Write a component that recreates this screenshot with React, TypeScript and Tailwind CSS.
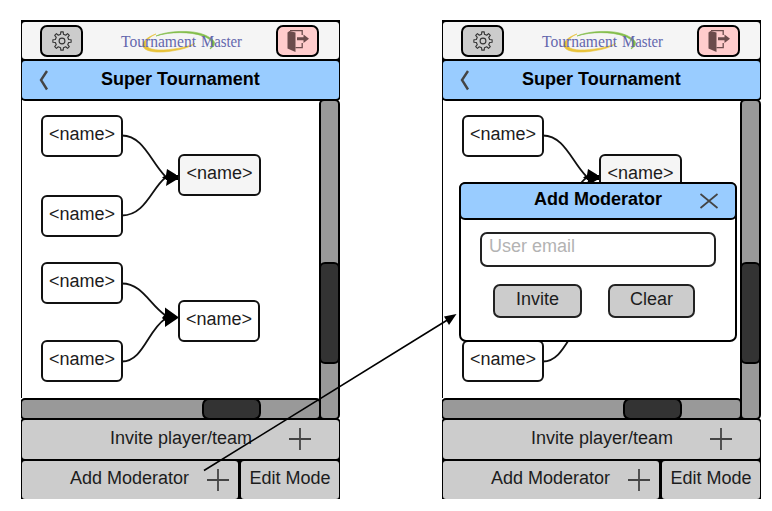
import type { ReactNode } from "react";

const TEXT = "text-[18px] leading-[20px] text-[#1c1c1c] whitespace-nowrap";

function gearPath(cx: number, cy: number, teeth: number, outer: number, inner: number) {
  const step = (Math.PI * 2) / teeth;
  const points: string[] = [];
  for (let i = 0; i < teeth; i++) {
    const a = i * step - Math.PI / 2;
    const corners: [number, number][] = [
      [inner, -0.27],
      [outer, -0.17],
      [outer, 0.17],
      [inner, 0.27],
    ];
    for (const [r, t] of corners) {
      points.push(`${(cx + r * Math.cos(a + t * step)).toFixed(2)} ${(cy + r * Math.sin(a + t * step)).toFixed(2)}`);
    }
  }
  return `M${points.join("L")}Z`;
}

function GearIcon() {
  return (
    <svg width="22" height="22" viewBox="0 0 22 22" fill="none" stroke="#333" strokeWidth="1.1" strokeLinejoin="round">
      <path d={gearPath(11, 11, 8, 9.2, 6.8)} />
      <circle cx="11" cy="11" r="2.9" />
    </svg>
  );
}

function ExitIcon() {
  return (
    <svg width="24" height="24" viewBox="0 0 24 24" fill="none" stroke="#6b4c4c" strokeWidth="1.3">
      <path d="M1.500 3.500L3.500 2L9.500 3.500V23L1.500 19.500Z" fill="#6b4c4c" stroke="none" />
      <path d="M4 1.600H16.200V6M16.200 14V18.700H9.500" />
      <path d="M11 8.300H17.500V5.500L23 9.800L17.500 14V11.300H11Z" fill="#6b4c4c" stroke="none" />
    </svg>
  );
}

function Logo() {
  return (
    <svg className="overflow-visible" width="124" height="30" viewBox="0 0 124 30" fill="none">
      <path d="M36 8C27 11 22 16 23 20.500C26 27 42 27.500 60 23.500C67 22 72 19.500 75 17.500C68 20.500 61 22 54 23C39 25 28.500 24 26.500 19.500C25 15.500 29 11 36 8Z" fill="#e8c23a" stroke="#e8c23a" strokeWidth=".6" />
      <path d="M36 10C46 5 73 3 86 9.500C95 14 98 18 90 23C94 17 91 13 83 10C70 5.500 50 5.500 36 10Z" fill="#83bd4a" stroke="#83bd4a" strokeWidth=".6" />
      <g fontSize="16" fill="#6467ad" fontFamily="'Liberation Serif', serif">
        <text x="1" y="21" textLength="75" lengthAdjust="spacingAndGlyphs">Tournament</text>
        <text x="81" y="21" textLength="41" lengthAdjust="spacingAndGlyphs">Master</text>
      </g>
    </svg>
  );
}

function PlusIcon() {
  return (
    <svg width="24" height="24" viewBox="0 0 24 24" stroke="#444" strokeWidth="1.8">
      <path d="M12 1V23M1 12H23" />
    </svg>
  );
}

const NODES = [
  { place: "left-[20px] top-[16px] w-[82px] bg-white" },
  { place: "left-[20px] top-[96px] w-[82px] bg-white" },
  { place: "left-[20px] top-[163px] w-[82px] bg-white" },
  { place: "left-[20px] top-[241px] w-[82px] bg-white" },
  { place: "left-[157px] top-[55px] w-[83px] bg-[#f5f5f5]" },
  { place: "left-[157px] top-[201px] w-[82px] bg-white" },
];

function Bracket() {
  return (
    <div className="relative flex-1 border-l border-black bg-white">
      <svg className="absolute -left-px top-0" width="299" height="299" viewBox="0 0 299 299" fill="none" stroke="#111" strokeWidth="1.8">
        <path d="M101 36.500C122 36.500 130 63 144 77" />
        <path d="M101 116.500C124 116.500 131 89 144 79" />
        <path d="M101 184.500C121 184.500 129 206 144 216" />
        <path d="M101 262.500C122 262.500 127 231 144 220" />
        <path d="M145 78.500H158" stroke="#000" strokeWidth="5" />
        <path d="M146 70L155 75.500V81L145 87L146 81L141 78.500L145 76Z" fill="#000" stroke="none" />
        <path d="M144 208.500L158 218.500L144 228V222L141 219L144 215Z" fill="#000" stroke="none" />
      </svg>
      <div className="absolute -left-px top-0">
        {NODES.map((node) => (
          <div key={node.place} className={`absolute flex h-[42px] justify-center rounded-[6px] border-2 border-[#111] pt-[7px] ${node.place}`}>
            <span className={TEXT}>&lt;name&gt;</span>
          </div>
        ))}
      </div>
    </div>
  );
}

function Phone({ children }: { children?: ReactNode }) {
  return (
    <section className="relative h-[479px] w-[319px] shrink-0">
      <div className="flex h-full flex-col overflow-hidden bg-black">
        <header className="-mx-px flex h-[41px] shrink-0 items-center justify-between rounded-[5px] border-2 border-black bg-[#f5f5f5] pl-[18px] pr-[20px]">
          <button className="flex h-[32px] w-[43px] items-center justify-center rounded-[7px] border-2 border-black bg-[#ccc]">
            <GearIcon />
          </button>
          <div className="pl-1">
            <Logo />
          </div>
          <button className="flex h-[32px] w-[43px] items-center justify-center rounded-[7px] border-2 border-black bg-[#fcc]">
            <ExitIcon />
          </button>
        </header>
        <div className="z-10 -mx-px -mt-[2px] flex h-[42px] shrink-0 items-start rounded-[5px] border-2 border-black bg-[#9cf] pl-[15px] pt-[8px]">
          <svg width="14" height="22" viewBox="0 0 14 22" fill="none" stroke="#444" strokeWidth="2.4">
            <path d="M10 2L4 11L10 20.500" />
          </svg>
          <h1 className="ml-[50px] whitespace-nowrap text-[18px] font-bold leading-[20px] text-black">Super Tournament</h1>
        </div>
        <div className="-mt-[2px] flex h-[321px] shrink-0 bg-white">
          <div className="flex w-[301px] flex-col">
            <Bracket />
            <div className="-ml-px flex h-[22px] rounded-[5px] border-2 border-black bg-[#999] pl-[180px]">
              <div className="-my-[2px] w-[59px] rounded-[7px] border-2 border-black bg-[#333]" />
            </div>
          </div>
          <div className="z-20 -ml-[2px] flex w-[21px] shrink-0 flex-col rounded-[5px] border-2 border-black bg-[#999] pt-[161px]">
            <div className="-mx-[2px] h-[102px] rounded-[6px] border-2 border-black bg-[#333]" />
          </div>
        </div>
        <div className="-mx-px -mt-[2px] flex h-[43px] shrink-0 rounded-[5px] border-2 border-black bg-[#ccc] pl-[88px]">
          <span className={`mt-[8px] w-[178px] ${TEXT}`}>Invite player/team</span>
          <span className="mt-[7px]">
            <PlusIcon />
          </span>
        </div>
        <div className="-mx-px -mt-[2px] flex h-[42px] shrink-0">
          <div className="flex w-[220px] rounded-[5px] border-2 border-black bg-[#ccc] pl-[48px]">
            <span className={`mt-[7px] w-[136px] ${TEXT}`}>Add Moderator</span>
            <span className="mt-[7px]">
              <PlusIcon />
            </span>
          </div>
          <div className="-ml-px flex flex-1 justify-center rounded-[5px] border-2 border-black bg-[#ccc] pt-[7px]">
            <span className={TEXT}>Edit Mode</span>
          </div>
        </div>
      </div>
      {children}
    </section>
  );
}

function ModeratorDialog() {
  return (
    <div className="absolute left-[17px] top-[162px] z-30 flex h-[160px] w-[278px] flex-col rounded-[7px] border-2 border-black bg-white">
      <div className="-mx-[2px] -mt-[2px] flex h-[38px] rounded-[6px] border-2 border-black bg-[#9cf] pl-[73px]">
        <h2 className="mt-[5px] w-[165px] whitespace-nowrap text-[18px] font-bold leading-[20px] text-black">Add Moderator</h2>
        <svg className="mt-[8px]" width="20" height="18" viewBox="0 0 20 18" stroke="#444" strokeWidth="1.7">
          <path d="M1.500 2L18.500 16M18.500 2L1.500 16" />
        </svg>
      </div>
      <div className="ml-[19px] mt-[12px] h-[35px] w-[236px] rounded-[7px] border-2 border-[#222] pl-[7px] pt-[2px] text-[18px] leading-[20px] text-[#b3b3b3]">
        User email
      </div>
      <div className="ml-[32px] mt-[17px] flex gap-[26px]">
        <button className={`flex h-[34px] w-[89px] justify-center rounded-[7px] border-2 border-[#222] bg-[#ccc] pt-[3px] ${TEXT}`}>Invite</button>
        <button className={`flex h-[34px] w-[87px] justify-center rounded-[7px] border-2 border-[#222] bg-[#ccc] pt-[3px] ${TEXT}`}>Clear</button>
      </div>
    </div>
  );
}

export default function App() {
  return (
    <main className="relative flex h-[511px] w-[772px] gap-[102px] overflow-hidden bg-white pl-[21px] pt-[20px] font-['Liberation_Sans',Arial,sans-serif]">
      <Phone />
      <Phone>
        <ModeratorDialog />
      </Phone>
      <svg className="pointer-events-none absolute left-0 top-0 z-40" width="772" height="511" viewBox="0 0 772 511">
        <path d="M204 470.500L449 319" stroke="#000" strokeWidth="1.6" />
        <path d="M456.500 314L444 316.500L449 325Z" fill="#000" />
      </svg>
    </main>
  );
}
